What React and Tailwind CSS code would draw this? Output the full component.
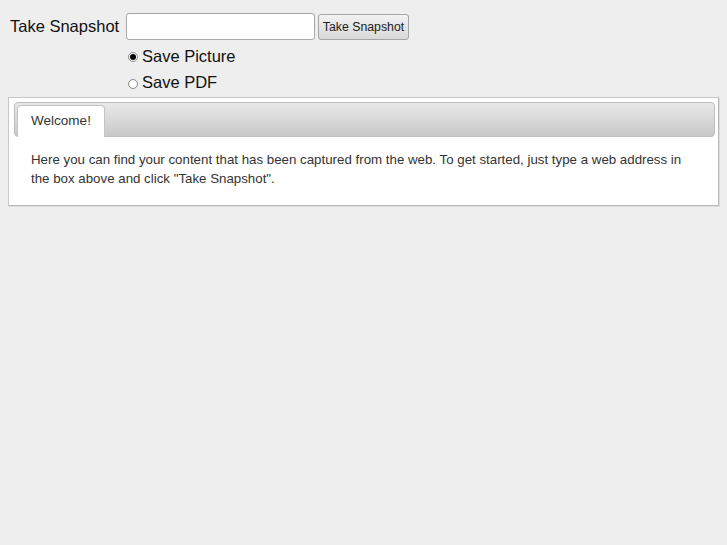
import React from 'react';

const App = () => {
  return (
    <div className="min-h-[545px] w-[727px] bg-[#eeeeee] font-['Liberation_Sans',Arial,sans-serif] text-[#111]">
      <div className="pt-3 pl-[10px]">
        {/* Snapshot form */}
        <div className="flex items-center">
          <span className="w-[116px] text-[16.5px] leading-[26px]">Take Snapshot</span>
          <input
            type="text"
            className="h-[27px] w-[189px] rounded-[3px] border border-[#a7a7a7] bg-white px-1 text-[14px] outline-none"
          />
          <button className="ml-[3px] mt-[2px] h-[26px] w-[91px] rounded-[3px] border border-[#a5a5a5] bg-gradient-to-b from-[#f2f2f2] to-[#d9d9d9] text-[12.3px] text-[#222]">
            Take Snapshot
          </button>
        </div>
        <div className="ml-[118px] mt-[3px] flex flex-col text-[16.5px] leading-[26px]">
          <label className="flex items-center">
            <span className="mr-[4px] mt-[2px] flex h-[10px] w-[10px] items-center justify-center rounded-full border border-[#888] bg-white">
              <span className="h-[6px] w-[6px] rounded-full bg-black" />
            </span>
            Save Picture
          </label>
          <label className="flex items-center">
            <span className="mr-[4px] mt-[3px] h-[10px] w-[10px] rounded-full border border-[#888] bg-white" />
            Save PDF
          </label>
        </div>
      </div>

      {/* Tabs panel */}
      <div className="ml-[8px] mt-[2px] w-[711px] border border-[#c8c8c8] border-b-[#b8b8b8] border-r-[#b8b8b8] bg-white pl-[5px] pr-[3px] pt-[4px] shadow-[1px_1px_0_#dcdcdc]">
        <div className="flex h-[35px] items-end rounded-[4px] border border-[#bdbdbd] bg-gradient-to-b from-[#e9e9e9] via-[#d9d9d9] to-[#c8c8c8] pl-[2px]">
          <div className="-mb-px flex h-[32px] w-[88px] items-center justify-center rounded-t-[4px] border border-b-0 border-[#c4c4c4] bg-white text-[13.5px] text-[#333]">
            Welcome!
          </div>
        </div>
        <p className="px-[17px] pb-[17px] pt-[13px] text-[13.3px] leading-[19px] text-[#333]">
          Here you can find your content that has been captured from the web. To get started, just type a web address in the box above and click "Take Snapshot".
        </p>
      </div>
    </div>
  );
};

export default App;
